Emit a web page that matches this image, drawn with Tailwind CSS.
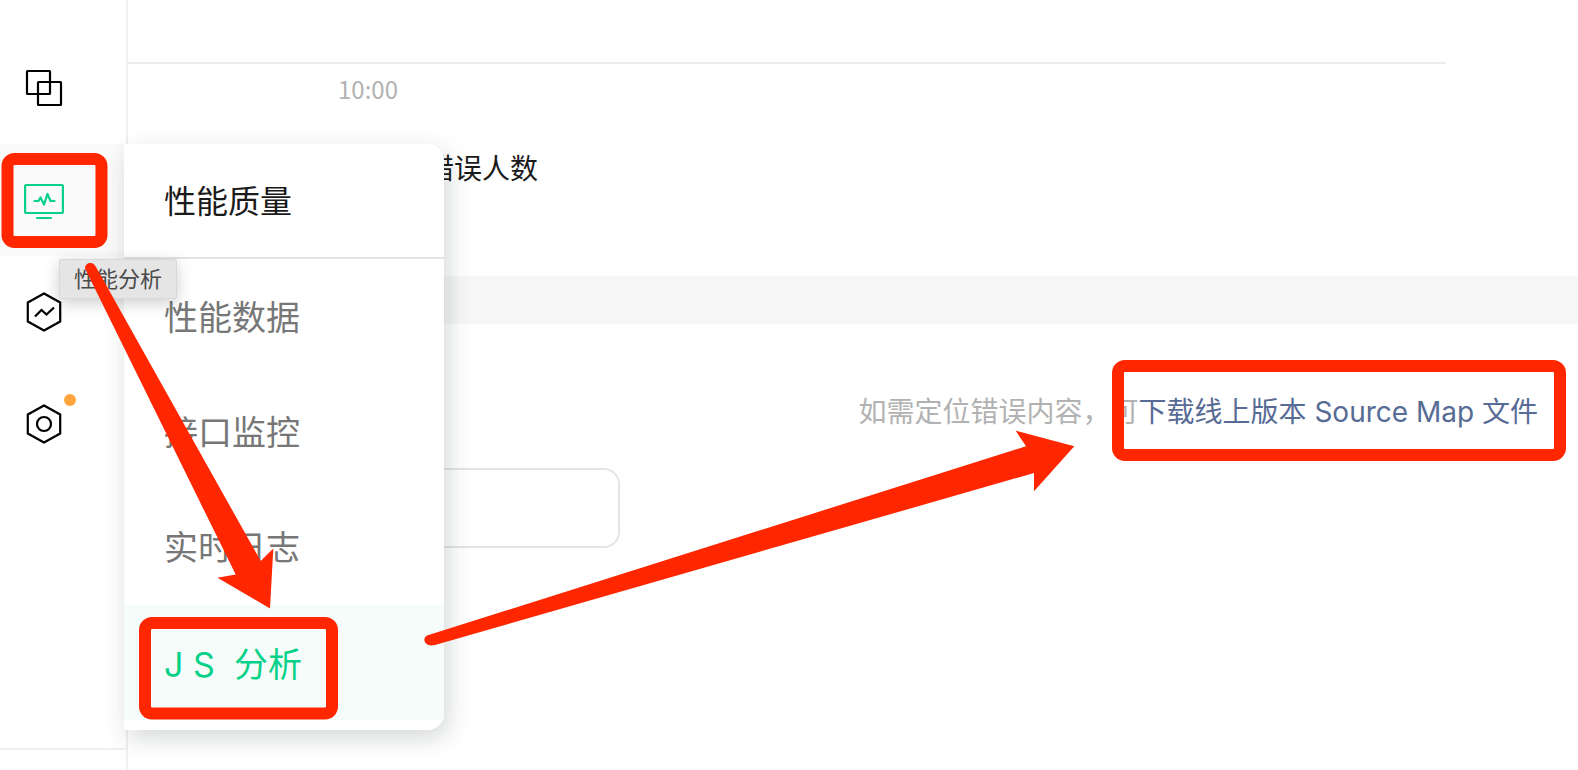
<!DOCTYPE html>
<html lang="zh-CN">
<head>
<meta charset="utf-8">
<meta name="viewport" content="width=device-width, initial-scale=1">
<title>性能质量 - JS 分析</title>
<script src="https://cdn.jsdelivr.net/npm/@tailwindcss/browser@4"></script>
</head>
<body class="relative flex min-h-screen overflow-x-hidden bg-white font-['Noto_Sans_CJK_SC',sans-serif] text-[#1a1a1a]">

  <!-- Icon sidebar -->
  <aside class="relative flex w-32 shrink-0 flex-col border-r-2 border-[#f0f0f0]">
    <nav class="flex flex-col pt-8" aria-label="主导航">
      <button type="button" aria-label="组件" class="flex h-28 items-center pl-6">
        <svg class="size-10" viewBox="0 0 40 40" fill="none" stroke="#000" stroke-width="2.200" stroke-linejoin="round"><rect x="3" y="3" width="23" height="23" rx="0.5"/><rect x="14" y="14" width="23" height="23" rx="0.5"/></svg>
      </button>
      <button type="button" aria-label="性能分析" class="flex h-28 items-center bg-[#fafafa] pl-6">
        <svg class="size-10" viewBox="0 0 40 40" fill="none" stroke="#07d188" stroke-width="2.200" stroke-linejoin="round" stroke-linecap="round"><rect x="1.100" y="5" width="37.800" height="28" rx="1"/><path d="M13 38h14M10.500 21h4l2-3.500 3.500 7 3.500-10.500 3 7h4"/></svg>
      </button>
      <button type="button" aria-label="数据趋势" class="flex h-28 items-center pl-6">
        <svg class="size-10" viewBox="0 0 40 40" fill="none" stroke="#000" stroke-width="2.200"><path d="M20 1.500 36.200 10.500v19L20 38.500 3.800 29.500V10.500Z"/><path d="M11 24.500 17.500 18l5 4.500L30 15.500"/></svg>
      </button>
      <button type="button" aria-label="设置" class="relative flex h-28 items-center pl-6">
        <svg class="size-10" viewBox="0 0 40 40" fill="none" stroke="#000" stroke-width="2.200"><path d="M20 1.500 36.200 10.500v19L20 38.500 3.800 29.500V10.500Z"/><circle cx="20" cy="20" r="7"/></svg>
        <span class="absolute left-16 top-[26px] size-3 rounded-full bg-[#ffa53d]"></span>
      </button>
    </nav>
    <div class="mt-auto h-[22px] border-t-2 border-[#f0f0f0]"></div>
  </aside>

  <!-- Page content -->
  <main class="min-w-0 flex-1">
    <section class="flex h-[276px] flex-col pt-[62px]">
      <div class="mr-[132px] border-t-2 border-[#ececec]"></div>
      <div class="mt-[7px] pl-[210px] text-2xl leading-9 text-[#b2b2b2]">10:00</div>
      <h2 class="mt-10 pl-[298px] text-[28px] leading-10">错误人数</h2>
    </section>
    <div class="h-12 bg-[#f6f6f6]"></div>
    <section class="flex flex-col pt-[66px]">
      <p class="pr-10 text-right text-[28px] leading-10 whitespace-nowrap text-[#b2b2b2]">如需定位错误内容，可<a href="#" class="font-[Inter,'Noto_Sans_CJK_SC',sans-serif] text-[#576b95]">下载线上版本 Source Map 文件</a></p>
      <input type="text" aria-label="搜索错误" class="mt-9 ml-10 h-20 w-[452px] rounded-2xl border-2 border-[#e4e4e4] px-6 text-[28px] outline-none">
    </section>
  </main>

  <!-- Flyout menu -->
  <nav aria-label="性能质量" class="absolute left-[124px] top-36 w-80 rounded-r-2xl bg-white pb-[10px] shadow-[4px_8px_24px_rgba(20,40,40,0.18)]">
    <h1 class="mb-px flex h-[115px] items-center border-b-2 border-[#e4e4e4] pb-1 pl-10 text-[32px] leading-none">性能质量</h1>
    <ul class="text-[34px] leading-none text-[#777]">
      <li><a href="#" class="flex h-[115px] items-center pb-1 pl-10">性能数据</a></li>
      <li><a href="#" class="flex h-[115px] items-center pb-1 pl-10">接口监控</a></li>
      <li><a href="#" class="flex h-[115px] items-center pb-1 pl-10">实时日志</a></li>
      <li><a href="#" aria-current="page" class="flex h-[115px] items-center bg-[#f5fcfa] pt-1 pl-10 font-[Inter,'Noto_Sans_CJK_SC',sans-serif] text-[#07d188]">J S&nbsp; 分析</a></li>
    </ul>
  </nav>

  <div role="tooltip" class="absolute left-[59px] top-[259px] rounded-xs border border-[#d8d8d8] bg-[#e5e5e5] px-[14px] pb-1 text-[22px] leading-[34px] text-[#4b4b4b] shadow-[0_4px_16px_rgba(0,0,0,0.2)]">性能分析</div>

  <!-- Step-by-step annotations -->
  <svg class="pointer-events-none absolute left-0 top-0" width="1578" height="770" viewBox="0 0 1578 770" aria-hidden="true">
    <g fill="none" stroke="#ff2600" stroke-width="12">
      <rect x="7.500" y="159" width="94" height="83" rx="7"/>
      <rect x="145" y="623" width="187" height="90.500" rx="7"/>
      <rect x="1118" y="366" width="442" height="89" rx="7"/>
    </g>
    <g fill="#ff2600">
      <path d="M85.500 269.500C83.500 265 89 261.500 93 263.500Q94.500 264.500 96 267L260.700 561 273.300 548.500 270 608.500 217.500 577.700 235.700 574.500Z"/>
      <path d="M427 635.500 1026 446.300 1015.700 430.700 1074.300 446.300 1034 491.300V473L435 645Q428 646.500 425.500 643Q422.500 638 427 635.500Z"/>
    </g>
  </svg>
</body>
</html>
